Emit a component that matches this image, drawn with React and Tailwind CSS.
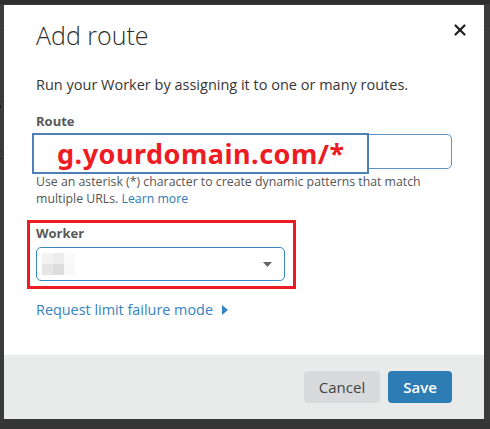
import { X } from 'lucide-react';

const font = { fontFamily: '"Open Sans", "Noto Sans", sans-serif' };

function Mosaic() {
  // blurred-out worker name
  return (
    <div className="grid grid-cols-[11px_11px_11px] grid-rows-[11px_11px]">
      <div className="bg-[#f3f3f3]" />
      <div className="bg-[#ededed]" />
      <div className="bg-[#fafafa]" />
      <div className="bg-[#e6e6e6]" />
      <div className="bg-[#dcdcdc]" />
      <div className="bg-[#f8f8f8]" />
    </div>
  );
}

export default function App() {
  return (
    <div className="relative w-[490px] h-[429px] overflow-hidden bg-[#3b3b3b] pt-[5px] pl-[4px]" style={font}>
      {/* page behind the overlay */}
      <div className="absolute inset-x-0 top-0 h-[4px] bg-[#2f2f2f]" />
      <div className="absolute inset-x-0 top-[28px] h-px bg-[#454545]" />
      <div className="absolute left-0 bottom-0 h-[10px] w-full bg-[#363636]" />
      <div className="absolute left-[-5px] top-[94px] w-[9px] overflow-hidden text-[14px] leading-[20px] text-[#1c1c1c]">
        <div>s</div>
        <div className="mt-[4px] text-[#1d3d63]">l</div>
        <div className="mt-[6px]">c</div>
        <div className="mt-[27px]">t</div>
      </div>

      {/* modal */}
      <div className="relative flex h-[414px] w-[480px] flex-col bg-white">
        <div className="flex-1 px-[32px] pt-[14px]">
          <div className="flex items-start justify-between">
            <h2 className="text-[25px] leading-[32px] font-light text-[#2e2e2e]">Add route</h2>
            <button className="mt-[2px] -mr-[17px] text-[#222]">
              <X size={18} strokeWidth={3} />
            </button>
          </div>

          <p className="mt-[24px] text-[14.5px] leading-[20px] text-[#363636]">
            Run your Worker by assigning it to one or many routes.
          </p>

          <label className="mt-[17px] block text-[13px] leading-[18px] font-bold text-[#595959]">Route</label>
          <div className="relative mt-[4px] h-[35px] w-[416px] rounded-[5px] border border-[#5b93c4] bg-white">
            {/* annotation over the input */}
            <div className="absolute left-[-5px] top-[-2px] flex h-[41px] w-[337px] items-center border-2 border-[#4f7fb7] bg-white pl-[23px]">
              <span className="text-[27px] leading-none font-bold tracking-[0.5px] text-[#ed1c24]" style={{ fontFamily: '"Noto Sans", sans-serif' }}>
                g.yourdomain.com/*
              </span>
            </div>
          </div>
          <p className="mt-[4px] text-[12.3px] leading-[17px] text-[#555]">
            Use an asterisk (*) character to create dynamic patterns that match multiple URLs.{' '}
            <span className="text-[#2e7bb6]">Learn more</span>
          </p>

          {/* highlighted worker field */}
          <div className="-ml-[9px] mt-[13px] w-[269px] border-[3px] border-[#ed1c24] pt-[1px] pr-[8px] pb-[5px] pl-[6px]">
            <label className="block text-[13px] leading-[18px] font-bold text-[#595959]">Worker</label>
            <div className="mt-[5px] flex h-[34px] items-center justify-between rounded-[5px] border border-[#3a86c0] pl-[5px] pr-[12px]">
              <Mosaic />
              <svg width="9" height="5" viewBox="0 0 9 5">
                <path d="M0 0h9L4.5 5z" fill="#666" />
              </svg>
            </div>
          </div>

          <div className="mt-[11px] flex items-center gap-[9px] text-[14.4px] leading-[20px] text-[#3583c0]">
            Request limit failure mode
            <svg width="6" height="10" viewBox="0 0 6 10">
              <path d="M0 0l6 5-6 5z" fill="#3583c0" />
            </svg>
          </div>
        </div>

        <div className="flex h-[64px] items-center justify-end gap-[8px] bg-[#e9eaea] pr-[32px]">
          <button className="h-[32px] w-[76px] rounded-[4px] bg-[#d9dadb] text-[15px] text-[#444]">Cancel</button>
          <button className="h-[32px] w-[64px] rounded-[4px] bg-[#2d7cb4] text-[15px] font-semibold text-white">Save</button>
        </div>
      </div>
    </div>
  );
}
